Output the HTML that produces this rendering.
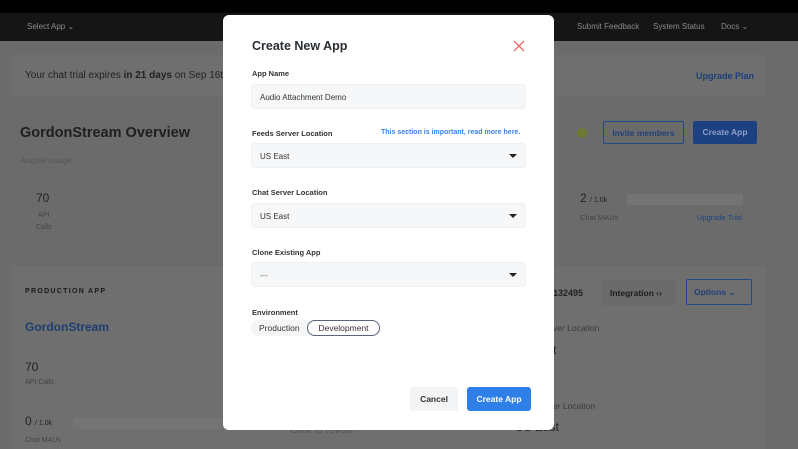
<!DOCTYPE html>
<html><head><meta charset="utf-8"><style>
*{box-sizing:border-box;margin:0;padding:0}
body{width:798px;height:449px;overflow:hidden;background:#6b6b6b;font-family:"Liberation Sans",sans-serif;position:relative}
.abs{position:absolute}
.top{left:0;top:0;width:798px;height:13px;background:#000}
.nav{left:0;top:13px;width:798px;height:28px;background:#151515;color:#8a8a8a;font-size:8px}
.card{background:#6f6f6f}
.modal{left:223px;top:15px;width:331px;height:415px;background:#fff;border-radius:6px}
.lbl{font-size:7.5px;font-weight:bold;color:#333;position:absolute;left:29px}
.inp{position:absolute;left:28px;width:275px;height:25px;background:#f6f7f8;border:1px solid #eef0f2;border-radius:4px;font-size:8px;color:#333;padding:8px 0 0 8px}
.caret{position:absolute;right:8px;top:10px;border-left:4px solid transparent;border-right:4px solid transparent;border-top:4px solid #222}
</style></head><body>
<div class="abs top"></div>
<div class="abs nav">
<span class="abs" style="left:27px;top:9px">Select App ⌄</span>
<span class="abs" style="left:577px;top:9px">Submit Feedback</span>
<span class="abs" style="left:653px;top:9px">System Status</span>
<span class="abs" style="left:721px;top:9px">Docs ⌄</span>
</div>
<div class="abs card" style="left:12px;top:55px;width:354px;height:41px"></div>
<div class="abs card" style="left:553px;top:55px;width:213px;height:41px"></div>
<div class="abs" style="left:25px;top:70px;font-size:10px;color:#222">Your chat trial expires <b>in 21 days</b> on Sep 16th</div>
<div class="abs" style="left:696px;top:71px;font-size:9px;font-weight:bold;color:#1c3f78">Upgrade Plan</div>
<div class="abs" style="left:20px;top:125px;font-size:14.5px;font-weight:bold;color:#1f1f1f">GordonStream Overview</div>
<div class="abs" style="left:20px;top:155px;font-size:8.5px;color:#555">August usage</div>
<div class="abs" style="left:36px;top:191px;font-size:12px;color:#222">70</div>
<div class="abs" style="left:36px;top:210px;font-size:7px;color:#444;line-height:12px;text-align:center">API<br>Calls</div>
<div class="abs" style="left:577px;top:128px;width:10px;height:10px;border-radius:50%;background:#6f7a30"></div>
<div class="abs" style="left:603px;top:121px;width:81px;height:23px;border:1.5px solid #22488a;border-radius:2px;font-size:8.5px;font-weight:bold;color:#22407a;text-align:center;padding-top:6px">Invite members</div>
<div class="abs" style="left:693px;top:121px;width:64px;height:23px;background:#1c4080;border-radius:2px;font-size:8.5px;font-weight:bold;color:#8aa0c8;text-align:center;padding-top:6px">Create App</div>
<div class="abs" style="left:580px;top:191px;font-size:12px;color:#222">2 <span style="font-size:7px">/ 1.0k</span></div>
<div class="abs" style="left:627px;top:194px;width:116px;height:11px;background:#747474;border-radius:2px"></div>
<div class="abs" style="left:580px;top:213px;font-size:7.5px;color:#444">Chat MAUs</div>
<div class="abs" style="left:697px;top:213px;font-size:7.5px;color:#1f4580">Upgrade Trial</div>
<div class="abs card" style="left:12px;top:266px;width:754px;height:183px"></div>
<div class="abs" style="left:25px;top:288px;font-size:7px;font-weight:bold;letter-spacing:1.3px;color:#1a1a1a">PRODUCTION APP</div>
<div class="abs" style="left:25px;top:320px;font-size:12px;font-weight:bold;color:#1e3e72">GordonStream</div>
<div class="abs" style="left:25px;top:360px;font-size:12px;color:#222">70</div>
<div class="abs" style="left:25px;top:379px;font-size:7px;color:#444">API Calls</div>
<div class="abs" style="left:25px;top:414px;font-size:12px;color:#222">0 <span style="font-size:7px">/ 1.0k</span></div>
<div class="abs" style="left:73px;top:418px;width:160px;height:11px;background:#747474;border-radius:2px"></div>
<div class="abs" style="left:25px;top:437px;font-size:7px;color:#444">Chat MAUs</div>
<div class="abs" style="left:553px;top:288px;font-size:9px;font-weight:bold;color:#222">132495</div>
<div class="abs" style="left:601px;top:280px;width:75px;height:25px;background:#6a6a6a;font-size:8.5px;font-weight:bold;color:#1c1c1c;padding:8px 0 0 9px">Integration ‹›</div>
<div class="abs" style="left:686px;top:279px;width:66px;height:26px;border:1.5px solid #22488a;border-radius:2px;font-size:8.5px;font-weight:bold;color:#22407a;padding:7px 0 0 7px">Options ⌄</div>
<div class="abs" style="left:553px;top:323px;font-size:8.5px;color:#3a3a3a">ver Location</div>
<div class="abs" style="left:553px;top:343px;font-size:12px;color:#222">t</div>
<div class="abs" style="left:553px;top:401px;font-size:8.5px;color:#3a3a3a">er Location</div>
<div class="abs" style="left:515px;top:420px;font-size:12px;color:#222">US East</div>
<div class="abs" style="left:290px;top:425px;font-size:10px;color:#555">Click to reveal</div>

<div class="abs modal">
<div class="abs" style="left:29px;top:24px;font-size:12.5px;font-weight:bold;color:#2a2f36">Create New App</div>
<svg class="abs" style="left:290px;top:25px" width="12" height="12" viewBox="0 0 12 12"><path d="M1 1L11 11M11 1L1 11" stroke="#f06a6a" stroke-width="1.3"/></svg>
<div class="lbl" style="top:54px">App Name</div>
<div class="inp" style="top:69px">Audio Attachment Demo</div>
<div class="lbl" style="top:114px">Feeds Server Location</div>
<div class="abs" style="left:158px;top:114px;font-size:7px;font-weight:bold;color:#3b82e8">This section is important, read more here.</div>
<div class="inp" style="top:128px">US East<span class="caret"></span></div>
<div class="lbl" style="top:173px">Chat Server Location</div>
<div class="inp" style="top:188px">US East<span class="caret"></span></div>
<div class="lbl" style="top:233px">Clone Existing App</div>
<div class="inp" style="top:247px;color:#666">---<span class="caret"></span></div>
<div class="lbl" style="top:293px">Environment</div>
<div class="abs" style="left:28px;top:305px;width:130px;height:16px;background:#f4f5f6;border-radius:8px"></div>
<div class="abs" style="left:36px;top:308px;font-size:8.5px;color:#333">Production</div>
<div class="abs" style="left:84px;top:305px;width:73px;height:16px;border:1.2px solid #5a6478;border-radius:8px;font-size:8.5px;color:#333;text-align:center;padding-top:2px;background:#fff">Development</div>
<div class="abs" style="left:187px;top:372px;width:48px;height:24px;background:#f3f4f5;border-radius:3px;font-size:8.5px;font-weight:bold;color:#333;text-align:center;padding-top:7px">Cancel</div>
<div class="abs" style="left:244px;top:372px;width:64px;height:24px;background:#2f7fe8;border-radius:3px;font-size:8.5px;font-weight:bold;color:#fff;text-align:center;padding-top:7px">Create App</div>
</div>
</body></html>
